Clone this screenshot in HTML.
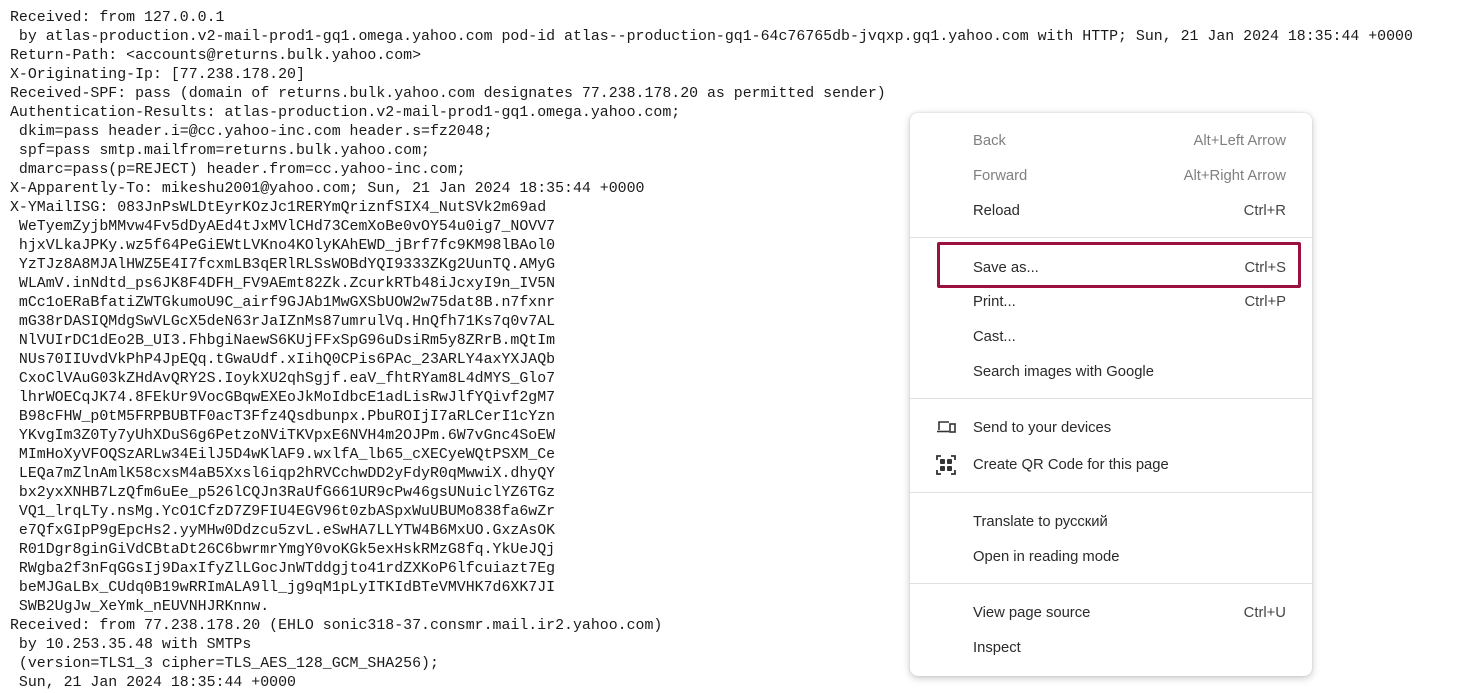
<!DOCTYPE html>
<html><head><meta charset="utf-8"><style>
html,body{margin:0;padding:0;background:#fff;width:1467px;height:691px;overflow:hidden}
pre{margin:0;position:absolute;left:10px;top:9px;font-family:"Liberation Mono",monospace;font-size:14.9px;line-height:19px;color:#1a1a1a}
.menu{position:absolute;left:910px;top:113px;width:402px;height:563px;background:#fff;border-radius:8px;box-shadow:0 2px 8px rgba(0,0,0,.22),0 0 2px rgba(0,0,0,.12)}
.it{position:absolute;left:63px;right:26px;font-family:"Liberation Sans",sans-serif;font-size:14.8px;color:#2a2a2a;height:20px;line-height:20px}
.it span{position:absolute;right:0;top:0;color:#444}
.dis{color:#808080}.dis span{color:#808080}
.sep{position:absolute;left:0;right:0;height:1px;background:#dde0e3}
.hl{position:absolute;left:27px;top:129px;width:358px;height:40px;border:3px solid #9b1040;border-radius:2px}
svg{position:absolute}
</style></head><body>
<pre>Received: from 127.0.0.1
 by atlas-production.v2-mail-prod1-gq1.omega.yahoo.com pod-id atlas--production-gq1-64c76765db-jvqxp.gq1.yahoo.com with HTTP; Sun, 21 Jan 2024 18:35:44 +0000
Return-Path: &lt;accounts@returns.bulk.yahoo.com&gt;
X-Originating-Ip: [77.238.178.20]
Received-SPF: pass (domain of returns.bulk.yahoo.com designates 77.238.178.20 as permitted sender)
Authentication-Results: atlas-production.v2-mail-prod1-gq1.omega.yahoo.com;
 dkim=pass header.i=@cc.yahoo-inc.com header.s=fz2048;
 spf=pass smtp.mailfrom=returns.bulk.yahoo.com;
 dmarc=pass(p=REJECT) header.from=cc.yahoo-inc.com;
X-Apparently-To: mikeshu2001@yahoo.com; Sun, 21 Jan 2024 18:35:44 +0000
X-YMailISG: 083JnPsWLDtEyrKOzJc1RERYmQriznfSIX4_NutSVk2m69ad
 WeTyemZyjbMMvw4Fv5dDyAEd4tJxMVlCHd73CemXoBe0vOY54u0ig7_NOVV7
 hjxVLkaJPKy.wz5f64PeGiEWtLVKno4KOlyKAhEWD_jBrf7fc9KM98lBAol0
 YzTJz8A8MJAlHWZ5E4I7fcxmLB3qERlRLSsWOBdYQI9333ZKg2UunTQ.AMyG
 WLAmV.inNdtd_ps6JK8F4DFH_FV9AEmt82Zk.ZcurkRTb48iJcxyI9n_IV5N
 mCc1oERaBfatiZWTGkumoU9C_airf9GJAb1MwGXSbUOW2w75dat8B.n7fxnr
 mG38rDASIQMdgSwVLGcX5deN63rJaIZnMs87umrulVq.HnQfh71Ks7q0v7AL
 NlVUIrDC1dEo2B_UI3.FhbgiNaewS6KUjFFxSpG96uDsiRm5y8ZRrB.mQtIm
 NUs70IIUvdVkPhP4JpEQq.tGwaUdf.xIihQ0CPis6PAc_23ARLY4axYXJAQb
 CxoClVAuG03kZHdAvQRY2S.IoykXU2qhSgjf.eaV_fhtRYam8L4dMYS_Glo7
 lhrWOECqJK74.8FEkUr9VocGBqwEXEoJkMoIdbcE1adLisRwJlfYQivf2gM7
 B98cFHW_p0tM5FRPBUBTF0acT3Ffz4Qsdbunpx.PbuROIjI7aRLCerI1cYzn
 YKvgIm3Z0Ty7yUhXDuS6g6PetzoNViTKVpxE6NVH4m2OJPm.6W7vGnc4SoEW
 MImHoXyVFOQSzARLw34EilJ5D4wKlAF9.wxlfA_lb65_cXECyeWQtPSXM_Ce
 LEQa7mZlnAmlK58cxsM4aB5Xxsl6iqp2hRVCchwDD2yFdyR0qMwwiX.dhyQY
 bx2yxXNHB7LzQfm6uEe_p526lCQJn3RaUfG661UR9cPw46gsUNuiclYZ6TGz
 VQ1_lrqLTy.nsMg.YcO1CfzD7Z9FIU4EGV96t0zbASpxWuUBUMo838fa6wZr
 e7QfxGIpP9gEpcHs2.yyMHw0Ddzcu5zvL.eSwHA7LLYTW4B6MxUO.GxzAsOK
 R01Dgr8ginGiVdCBtaDt26C6bwrmrYmgY0voKGk5exHskRMzG8fq.YkUeJQj
 RWgba2f3nFqGGsIj9DaxIfyZlLGocJnWTddgjto41rdZXKoP6lfcuiazt7Eg
 beMJGaLBx_CUdq0B19wRRImALA9ll_jg9qM1pLyITKIdBTeVMVHK7d6XK7JI
 SWB2UgJw_XeYmk_nEUVNHJRKnnw.
Received: from 77.238.178.20 (EHLO sonic318-37.consmr.mail.ir2.yahoo.com)
 by 10.253.35.48 with SMTPs
 (version=TLS1_3 cipher=TLS_AES_128_GCM_SHA256);
 Sun, 21 Jan 2024 18:35:44 +0000</pre>
<div class="menu">
<div class="it dis" style="top:18px">Back<span>Alt+Left Arrow</span></div>
<div class="it dis" style="top:53px">Forward<span>Alt+Right Arrow</span></div>
<div class="it" style="top:88px">Reload<span>Ctrl+R</span></div>
<div class="sep" style="top:124px"></div>
<div class="hl"></div>
<div class="it" style="top:145px">Save as...<span>Ctrl+S</span></div>
<div class="it" style="top:179px">Print...<span>Ctrl+P</span></div>
<div class="it" style="top:214px">Cast...</div>
<div class="it" style="top:249px">Search images with Google</div>
<div class="sep" style="top:285px"></div>
<svg style="left:26px;top:307px" width="20" height="14" viewBox="0 0 20 14"><path d="M3 10V2h10" fill="none" stroke="#333" stroke-width="1.6"/><path d="M1 11.5h12" stroke="#333" stroke-width="1.6"/><rect x="14" y="4" width="5" height="8" fill="none" stroke="#333" stroke-width="1.6"/></svg>
<div class="it" style="top:305px">Send to your devices</div>
<svg style="left:26px;top:342px" width="20" height="20" viewBox="0 0 20 20"><path d="M1 5V1h4M15 1h4v4M19 15v4h-4M5 19H1v-4" fill="none" stroke="#333" stroke-width="1.8"/><rect x="4" y="4" width="5" height="5" rx="1" fill="#333"/><rect x="11" y="4" width="5" height="5" rx="1" fill="#333"/><rect x="4" y="11" width="5" height="5" rx="1" fill="#333"/><rect x="11" y="11" width="5" height="5" rx="1" fill="#333"/></svg>
<div class="it" style="top:342px">Create QR Code for this page</div>
<div class="sep" style="top:379px"></div>
<div class="it" style="top:399px">Translate to русский</div>
<div class="it" style="top:434px">Open in reading mode</div>
<div class="sep" style="top:470px"></div>
<div class="it" style="top:490px">View page source<span>Ctrl+U</span></div>
<div class="it" style="top:525px">Inspect</div>
</div>
</body></html>
